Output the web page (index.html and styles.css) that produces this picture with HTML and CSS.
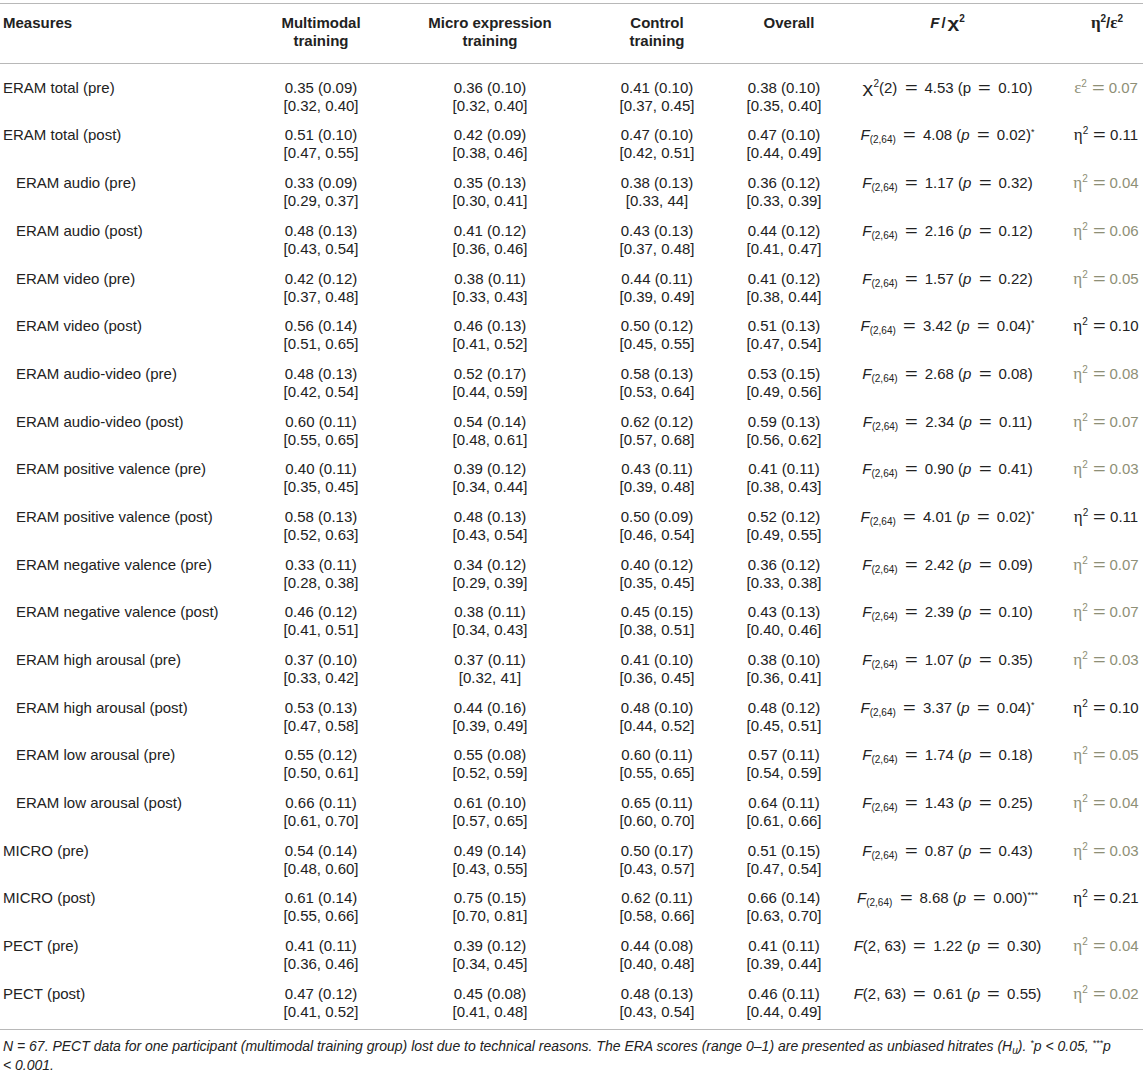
FILE: index.html
```html
<!DOCTYPE html>
<html>
<head>
    <title>ERAM / MICRO / PECT results</title>
    <link rel="stylesheet" href="styles.css">
</head>
<body>
    <div class="wrap">
        <table>
            <colgroup>
                <col class="c-measure">
                <col class="c-multi">
                <col class="c-micro">
                <col class="c-control">
                <col class="c-overall">
                <col class="c-f">
                <col class="c-eta">
            </colgroup>
            <thead>
                <tr>
                    <th class="label">Measures</th>
                    <th>Multimodal<br>training</th>
                    <th>Micro expression<br>training</th>
                    <th>Control<br>training</th>
                    <th class="overall">Overall</th>
                    <th class="fcol"><i>F</i><span class="sl">/</span><span class="chi">χ</span><sup>2</sup></th>
                    <th><span class="gr">η</span><sup>2</sup>/<span class="gr">ε</span><sup>2</sup></th>
                </tr>
            </thead>
            <tbody>
                <tr>
                    <td class="label">ERAM total (pre)</td>
                    <td>0.35 (0.09)<br>[0.32, 0.40]</td>
                    <td>0.36 (0.10)<br>[0.32, 0.40]</td>
                    <td>0.41 (0.10)<br>[0.37, 0.45]</td>
                    <td>0.38 (0.10)<br>[0.35, 0.40]</td>
                    <td class="fcol"><span class="chi">χ</span><sup>2</sup>(2) <span class="eq">=</span> 4.53 (p <span class="eq">=</span> 0.10)</td>
                    <td class="es ns"><span class="gr">ε</span><sup>2</sup><span class="eq">=</span>0.07</td>
                </tr>
                <tr>
                    <td class="label">ERAM total (post)</td>
                    <td>0.51 (0.10)<br>[0.47, 0.55]</td>
                    <td>0.42 (0.09)<br>[0.38, 0.46]</td>
                    <td>0.47 (0.10)<br>[0.42, 0.51]</td>
                    <td>0.47 (0.10)<br>[0.44, 0.49]</td>
                    <td class="fcol"><i>F</i><sub>(2,64)</sub> <span class="eq">=</span> 4.08 (<i>p</i> <span class="eq">=</span> 0.02)<sup class="star">*</sup></td>
                    <td class="es"><span class="gr">η</span><sup>2</sup><span class="eq">=</span>0.11</td>
                </tr>
                <tr>
                    <td class="label ind">ERAM audio (pre)</td>
                    <td>0.33 (0.09)<br>[0.29, 0.37]</td>
                    <td>0.35 (0.13)<br>[0.30, 0.41]</td>
                    <td>0.38 (0.13)<br>[0.33, 44]</td>
                    <td>0.36 (0.12)<br>[0.33, 0.39]</td>
                    <td class="fcol"><i>F</i><sub>(2,64)</sub> <span class="eq">=</span> 1.17 (<i>p</i> <span class="eq">=</span> 0.32)</td>
                    <td class="es ns"><span class="gr">η</span><sup>2</sup><span class="eq">=</span>0.04</td>
                </tr>
                <tr>
                    <td class="label ind">ERAM audio (post)</td>
                    <td>0.48 (0.13)<br>[0.43, 0.54]</td>
                    <td>0.41 (0.12)<br>[0.36, 0.46]</td>
                    <td>0.43 (0.13)<br>[0.37, 0.48]</td>
                    <td>0.44 (0.12)<br>[0.41, 0.47]</td>
                    <td class="fcol"><i>F</i><sub>(2,64)</sub> <span class="eq">=</span> 2.16 (<i>p</i> <span class="eq">=</span> 0.12)</td>
                    <td class="es ns"><span class="gr">η</span><sup>2</sup><span class="eq">=</span>0.06</td>
                </tr>
                <tr>
                    <td class="label ind">ERAM video (pre)</td>
                    <td>0.42 (0.12)<br>[0.37, 0.48]</td>
                    <td>0.38 (0.11)<br>[0.33, 0.43]</td>
                    <td>0.44 (0.11)<br>[0.39, 0.49]</td>
                    <td>0.41 (0.12)<br>[0.38, 0.44]</td>
                    <td class="fcol"><i>F</i><sub>(2,64)</sub> <span class="eq">=</span> 1.57 (<i>p</i> <span class="eq">=</span> 0.22)</td>
                    <td class="es ns"><span class="gr">η</span><sup>2</sup><span class="eq">=</span>0.05</td>
                </tr>
                <tr>
                    <td class="label ind">ERAM video (post)</td>
                    <td>0.56 (0.14)<br>[0.51, 0.65]</td>
                    <td>0.46 (0.13)<br>[0.41, 0.52]</td>
                    <td>0.50 (0.12)<br>[0.45, 0.55]</td>
                    <td>0.51 (0.13)<br>[0.47, 0.54]</td>
                    <td class="fcol"><i>F</i><sub>(2,64)</sub> <span class="eq">=</span> 3.42 (<i>p</i> <span class="eq">=</span> 0.04)<sup class="star">*</sup></td>
                    <td class="es"><span class="gr">η</span><sup>2</sup><span class="eq">=</span>0.10</td>
                </tr>
                <tr>
                    <td class="label ind">ERAM audio-video (pre)</td>
                    <td>0.48 (0.13)<br>[0.42, 0.54]</td>
                    <td>0.52 (0.17)<br>[0.44, 0.59]</td>
                    <td>0.58 (0.13)<br>[0.53, 0.64]</td>
                    <td>0.53 (0.15)<br>[0.49, 0.56]</td>
                    <td class="fcol"><i>F</i><sub>(2,64)</sub> <span class="eq">=</span> 2.68 (<i>p</i> <span class="eq">=</span> 0.08)</td>
                    <td class="es ns"><span class="gr">η</span><sup>2</sup><span class="eq">=</span>0.08</td>
                </tr>
                <tr>
                    <td class="label ind">ERAM audio-video (post)</td>
                    <td>0.60 (0.11)<br>[0.55, 0.65]</td>
                    <td>0.54 (0.14)<br>[0.48, 0.61]</td>
                    <td>0.62 (0.12)<br>[0.57, 0.68]</td>
                    <td>0.59 (0.13)<br>[0.56, 0.62]</td>
                    <td class="fcol"><i>F</i><sub>(2,64)</sub> <span class="eq">=</span> 2.34 (<i>p</i> <span class="eq">=</span> 0.11)</td>
                    <td class="es ns"><span class="gr">η</span><sup>2</sup><span class="eq">=</span>0.07</td>
                </tr>
                <tr>
                    <td class="label ind">ERAM positive valence (pre)</td>
                    <td>0.40 (0.11)<br>[0.35, 0.45]</td>
                    <td>0.39 (0.12)<br>[0.34, 0.44]</td>
                    <td>0.43 (0.11)<br>[0.39, 0.48]</td>
                    <td>0.41 (0.11)<br>[0.38, 0.43]</td>
                    <td class="fcol"><i>F</i><sub>(2,64)</sub> <span class="eq">=</span> 0.90 (<i>p</i> <span class="eq">=</span> 0.41)</td>
                    <td class="es ns"><span class="gr">η</span><sup>2</sup><span class="eq">=</span>0.03</td>
                </tr>
                <tr>
                    <td class="label ind">ERAM positive valence (post)</td>
                    <td>0.58 (0.13)<br>[0.52, 0.63]</td>
                    <td>0.48 (0.13)<br>[0.43, 0.54]</td>
                    <td>0.50 (0.09)<br>[0.46, 0.54]</td>
                    <td>0.52 (0.12)<br>[0.49, 0.55]</td>
                    <td class="fcol"><i>F</i><sub>(2,64)</sub> <span class="eq">=</span> 4.01 (<i>p</i> <span class="eq">=</span> 0.02)<sup class="star">*</sup></td>
                    <td class="es"><span class="gr">η</span><sup>2</sup><span class="eq">=</span>0.11</td>
                </tr>
                <tr>
                    <td class="label ind">ERAM negative valence (pre)</td>
                    <td>0.33 (0.11)<br>[0.28, 0.38]</td>
                    <td>0.34 (0.12)<br>[0.29, 0.39]</td>
                    <td>0.40 (0.12)<br>[0.35, 0.45]</td>
                    <td>0.36 (0.12)<br>[0.33, 0.38]</td>
                    <td class="fcol"><i>F</i><sub>(2,64)</sub> <span class="eq">=</span> 2.42 (<i>p</i> <span class="eq">=</span> 0.09)</td>
                    <td class="es ns"><span class="gr">η</span><sup>2</sup><span class="eq">=</span>0.07</td>
                </tr>
                <tr>
                    <td class="label ind">ERAM negative valence (post)</td>
                    <td>0.46 (0.12)<br>[0.41, 0.51]</td>
                    <td>0.38 (0.11)<br>[0.34, 0.43]</td>
                    <td>0.45 (0.15)<br>[0.38, 0.51]</td>
                    <td>0.43 (0.13)<br>[0.40, 0.46]</td>
                    <td class="fcol"><i>F</i><sub>(2,64)</sub> <span class="eq">=</span> 2.39 (<i>p</i> <span class="eq">=</span> 0.10)</td>
                    <td class="es ns"><span class="gr">η</span><sup>2</sup><span class="eq">=</span>0.07</td>
                </tr>
                <tr>
                    <td class="label ind">ERAM high arousal (pre)</td>
                    <td>0.37 (0.10)<br>[0.33, 0.42]</td>
                    <td>0.37 (0.11)<br>[0.32, 41]</td>
                    <td>0.41 (0.10)<br>[0.36, 0.45]</td>
                    <td>0.38 (0.10)<br>[0.36, 0.41]</td>
                    <td class="fcol"><i>F</i><sub>(2,64)</sub> <span class="eq">=</span> 1.07 (<i>p</i> <span class="eq">=</span> 0.35)</td>
                    <td class="es ns"><span class="gr">η</span><sup>2</sup><span class="eq">=</span>0.03</td>
                </tr>
                <tr>
                    <td class="label ind">ERAM high arousal (post)</td>
                    <td>0.53 (0.13)<br>[0.47, 0.58]</td>
                    <td>0.44 (0.16)<br>[0.39, 0.49]</td>
                    <td>0.48 (0.10)<br>[0.44, 0.52]</td>
                    <td>0.48 (0.12)<br>[0.45, 0.51]</td>
                    <td class="fcol"><i>F</i><sub>(2,64)</sub> <span class="eq">=</span> 3.37 (<i>p</i> <span class="eq">=</span> 0.04)<sup class="star">*</sup></td>
                    <td class="es"><span class="gr">η</span><sup>2</sup><span class="eq">=</span>0.10</td>
                </tr>
                <tr>
                    <td class="label ind">ERAM low arousal (pre)</td>
                    <td>0.55 (0.12)<br>[0.50, 0.61]</td>
                    <td>0.55 (0.08)<br>[0.52, 0.59]</td>
                    <td>0.60 (0.11)<br>[0.55, 0.65]</td>
                    <td>0.57 (0.11)<br>[0.54, 0.59]</td>
                    <td class="fcol"><i>F</i><sub>(2,64)</sub> <span class="eq">=</span> 1.74 (<i>p</i> <span class="eq">=</span> 0.18)</td>
                    <td class="es ns"><span class="gr">η</span><sup>2</sup><span class="eq">=</span>0.05</td>
                </tr>
                <tr>
                    <td class="label ind">ERAM low arousal (post)</td>
                    <td>0.66 (0.11)<br>[0.61, 0.70]</td>
                    <td>0.61 (0.10)<br>[0.57, 0.65]</td>
                    <td>0.65 (0.11)<br>[0.60, 0.70]</td>
                    <td>0.64 (0.11)<br>[0.61, 0.66]</td>
                    <td class="fcol"><i>F</i><sub>(2,64)</sub> <span class="eq">=</span> 1.43 (<i>p</i> <span class="eq">=</span> 0.25)</td>
                    <td class="es ns"><span class="gr">η</span><sup>2</sup><span class="eq">=</span>0.04</td>
                </tr>
                <tr>
                    <td class="label">MICRO (pre)</td>
                    <td>0.54 (0.14)<br>[0.48, 0.60]</td>
                    <td>0.49 (0.14)<br>[0.43, 0.55]</td>
                    <td>0.50 (0.17)<br>[0.43, 0.57]</td>
                    <td>0.51 (0.15)<br>[0.47, 0.54]</td>
                    <td class="fcol"><i>F</i><sub>(2,64)</sub> <span class="eq">=</span> 0.87 (<i>p</i> <span class="eq">=</span> 0.43)</td>
                    <td class="es ns"><span class="gr">η</span><sup>2</sup><span class="eq">=</span>0.03</td>
                </tr>
                <tr>
                    <td class="label">MICRO (post)</td>
                    <td>0.61 (0.14)<br>[0.55, 0.66]</td>
                    <td>0.75 (0.15)<br>[0.70, 0.81]</td>
                    <td>0.62 (0.11)<br>[0.58, 0.66]</td>
                    <td>0.66 (0.14)<br>[0.63, 0.70]</td>
                    <td class="fcol"><i>F</i><sub>(2,64)</sub> <span class="eq">=</span> 8.68 (<i>p</i> <span class="eq">=</span> 0.00)<sup class="star">***</sup></td>
                    <td class="es"><span class="gr">η</span><sup>2</sup><span class="eq">=</span>0.21</td>
                </tr>
                <tr>
                    <td class="label">PECT (pre)</td>
                    <td>0.41 (0.11)<br>[0.36, 0.46]</td>
                    <td>0.39 (0.12)<br>[0.34, 0.45]</td>
                    <td>0.44 (0.08)<br>[0.40, 0.48]</td>
                    <td>0.41 (0.11)<br>[0.39, 0.44]</td>
                    <td class="fcol"><i>F</i>(2, 63) <span class="eq">=</span> 1.22 (<i>p</i> <span class="eq">=</span> 0.30)</td>
                    <td class="es ns"><span class="gr">η</span><sup>2</sup><span class="eq">=</span>0.04</td>
                </tr>
                <tr>
                    <td class="label">PECT (post)</td>
                    <td>0.47 (0.12)<br>[0.41, 0.52]</td>
                    <td>0.45 (0.08)<br>[0.41, 0.48]</td>
                    <td>0.48 (0.13)<br>[0.43, 0.54]</td>
                    <td>0.46 (0.11)<br>[0.44, 0.49]</td>
                    <td class="fcol"><i>F</i>(2, 63) <span class="eq">=</span> 0.61 (<i>p</i> <span class="eq">=</span> 0.55)</td>
                    <td class="es ns"><span class="gr">η</span><sup>2</sup><span class="eq">=</span>0.02</td>
                </tr>
            </tbody>
        </table>

        <p class="note">N = 67. PECT data for one participant (multimodal training group) lost due to technical reasons. The ERA scores (range 0–1) are presented as unbiased hitrates (H<sub>u</sub>). <sup class="star">*</sup>p &lt; 0.05, <sup class="star">***</sup>p &lt;&nbsp;0.001.</p>
    </div>
</body>
</html>
```

FILE: styles.css
```css
body { margin: 0; font-family: "Liberation Sans", Arial, sans-serif; color: #222; background: #fff; }
.wrap { padding-top: 3px; }

table { width: 100%; table-layout: fixed; border-collapse: collapse; font-size: 15px; line-height: 18px; }
.c-measure { width: 250px; }
.c-multi { width: 142px; }
.c-micro { width: 196px; }
.c-control { width: 138px; }
.c-overall { width: 116px; }
.c-f { width: 229px; }
.c-eta { width: 72px; }

th { font-weight: bold; vertical-align: top; text-align: center; padding: 10px 4px 13px; border-top: 1px solid #b8b8b8; border-bottom: 1px solid #b8b8b8; white-space: nowrap; }
td { vertical-align: top; text-align: center; padding: 5px 4px 6.7px; white-space: nowrap; }
th.label, td.label { text-align: left; padding-left: 3px; }
th.overall { padding-left: 14px; }
td.ind { padding-left: 16px; }
.fcol { padding-right: 22px; }
.es { padding-left: 0; padding-right: 2px; }
.ns { color: #8e8f76; }

.gr { font-family: "Liberation Serif", "Times New Roman", serif; font-size: 17px; }
.chi { display: inline-block; transform: scaleX(1.35); margin: 0 2px 0 1px; font-weight: normal; }
th .chi { font-weight: bold; }
.sl { margin: 0 2px; }
.eq { display: inline-block; transform: scaleX(1.45); margin: 0 5px; }
.es .eq { margin: 0 6px 0 7px; }

tbody tr:first-child td { padding-top: 14.8px; }
tbody tr:last-child td { padding-bottom: 8.5px; border-bottom: 1px solid #b8b8b8; }

sup { font-size: 10px; line-height: 0; vertical-align: 6px; }
sub { font-size: 10px; line-height: 0; vertical-align: -3px; }
sup.star { font-size: 9px; vertical-align: 5px; }

.note { margin: 0; padding: 7px 3px 0; font-size: 14px; line-height: 19px; font-style: italic; }
```
